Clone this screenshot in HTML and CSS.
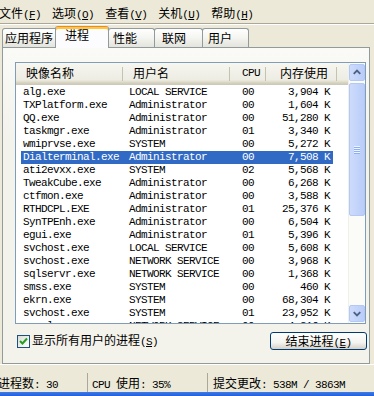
FILE: index.html
```html
<!DOCTYPE html>
<html lang="zh-CN">
<head>
    <meta charset="UTF-8">
    <title>Windows 任务管理器</title>
    <link rel="stylesheet" href="styles.css">
</head>
<body>

    <div class="window">
        <!-- Menu Bar -->
        <div class="menubar">
            <span class="menu">文件<span class="en">(<u>F</u>)</span></span>
            <span class="menu">选项<span class="en">(<u>O</u>)</span></span>
            <span class="menu">查看<span class="en">(<u>V</u>)</span></span>
            <span class="menu">关机<span class="en">(<u>U</u>)</span></span>
            <span class="menu">帮助<span class="en">(<u>H</u>)</span></span>
        </div>

        <!-- Tabs -->
        <div class="tabs">
            <div class="tab tab-app">应用程序</div>
            <div class="tab active">进程</div>
            <div class="tab tab-perf">性能</div>
            <div class="tab tab-net">联网</div>
            <div class="tab tab-user">用户</div>
        </div>

        <!-- Processes Page -->
        <div class="panel">
            <div class="listbox">
                <div class="listmain">
                    <div class="header">
                        <div class="hcell c-name">映像名称</div>
                        <div class="hcell c-user">用户名</div>
                        <div class="hcell c-cpu en">CPU</div>
                        <div class="hcell c-mem">内存使用</div>
                        <div class="hcell c-rest"></div>
                    </div>
                    <div class="rows en">
                        <div class="row"><span class="name">alg.exe</span><span class="user">LOCAL SERVICE</span><span class="cpu">00</span><span class="mem">3,904 K</span></div>
                        <div class="row"><span class="name">TXPlatform.exe</span><span class="user">Administrator</span><span class="cpu">00</span><span class="mem">1,604 K</span></div>
                        <div class="row"><span class="name">QQ.exe</span><span class="user">Administrator</span><span class="cpu">00</span><span class="mem">51,280 K</span></div>
                        <div class="row"><span class="name">taskmgr.exe</span><span class="user">Administrator</span><span class="cpu">01</span><span class="mem">3,340 K</span></div>
                        <div class="row"><span class="name">wmiprvse.exe</span><span class="user">SYSTEM</span><span class="cpu">00</span><span class="mem">5,272 K</span></div>
                        <div class="row selected"><span class="name">Dialterminal.exe</span><span class="user">Administrator</span><span class="cpu">00</span><span class="mem">7,508 K</span></div>
                        <div class="row"><span class="name">ati2evxx.exe</span><span class="user">SYSTEM</span><span class="cpu">02</span><span class="mem">5,568 K</span></div>
                        <div class="row"><span class="name">TweakCube.exe</span><span class="user">Administrator</span><span class="cpu">00</span><span class="mem">6,268 K</span></div>
                        <div class="row"><span class="name">ctfmon.exe</span><span class="user">Administrator</span><span class="cpu">00</span><span class="mem">3,588 K</span></div>
                        <div class="row"><span class="name">RTHDCPL.EXE</span><span class="user">Administrator</span><span class="cpu">01</span><span class="mem">25,376 K</span></div>
                        <div class="row"><span class="name">SynTPEnh.exe</span><span class="user">Administrator</span><span class="cpu">00</span><span class="mem">6,504 K</span></div>
                        <div class="row"><span class="name">egui.exe</span><span class="user">Administrator</span><span class="cpu">01</span><span class="mem">5,396 K</span></div>
                        <div class="row"><span class="name">svchost.exe</span><span class="user">LOCAL SERVICE</span><span class="cpu">00</span><span class="mem">5,608 K</span></div>
                        <div class="row"><span class="name">svchost.exe</span><span class="user">NETWORK SERVICE</span><span class="cpu">00</span><span class="mem">3,968 K</span></div>
                        <div class="row"><span class="name">sqlservr.exe</span><span class="user">NETWORK SERVICE</span><span class="cpu">00</span><span class="mem">1,368 K</span></div>
                        <div class="row"><span class="name">smss.exe</span><span class="user">SYSTEM</span><span class="cpu">00</span><span class="mem">460 K</span></div>
                        <div class="row"><span class="name">ekrn.exe</span><span class="user">SYSTEM</span><span class="cpu">00</span><span class="mem">68,304 K</span></div>
                        <div class="row"><span class="name">svchost.exe</span><span class="user">SYSTEM</span><span class="cpu">01</span><span class="mem">23,952 K</span></div>
                        <div class="row"><span class="name">spoolsv.exe</span><span class="user">NETWORK SERVICE</span><span class="cpu">00</span><span class="mem">4,316 K</span></div>
                    </div>
                </div>
                <div class="scrollbar">
                    <div class="sbtn">
                        <svg width="15" height="15" viewBox="0 0 15 15"><path d="M4 9 L7.5 5.5 L11 9" fill="none" stroke="#4D6185" stroke-width="2"/></svg>
                    </div>
                    <div class="track">
                        <div class="thumb">
                            <svg width="8" height="8" viewBox="0 0 8 8">
                                <rect x="1" y="0" width="6" height="1" fill="#EEF4FE"/>
                                <rect x="1" y="1" width="6" height="1" fill="#8CB0F8"/>
                                <rect x="1" y="2" width="6" height="1" fill="#EEF4FE"/>
                                <rect x="1" y="3" width="6" height="1" fill="#8CB0F8"/>
                                <rect x="1" y="4" width="6" height="1" fill="#EEF4FE"/>
                                <rect x="1" y="5" width="6" height="1" fill="#8CB0F8"/>
                                <rect x="1" y="6" width="6" height="1" fill="#EEF4FE"/>
                                <rect x="1" y="7" width="6" height="1" fill="#8CB0F8"/>
                            </svg>
                        </div>
                    </div>
                    <div class="sbtn">
                        <svg width="15" height="15" viewBox="0 0 15 15"><path d="M4 6 L7.5 9.5 L11 6" fill="none" stroke="#4D6185" stroke-width="2"/></svg>
                    </div>
                </div>
            </div>

            <div class="controls">
                <label class="check">
                    <span class="box">
                        <svg width="11" height="11" viewBox="0 0 11 11"><path d="M2 5 L4.5 7.5 L9 2.5" fill="none" stroke="#21A121" stroke-width="2"/></svg>
                    </span>
                    <span>显示所有用户的进程<span class="en">(<u>S</u>)</span></span>
                </label>
                <button class="end-btn">结束进程<span class="en">(<u>E</u>)</span></button>
            </div>
        </div>

        <!-- Status Bar -->
        <div class="statusbar">
            <div class="field f-count">进程数<span class="en">: 30</span></div>
            <div class="field f-cpu"><span class="en">CPU </span>使用<span class="en">: 35%</span></div>
            <div class="field f-commit">提交更改<span class="en">: 538M / 3863M</span></div>
        </div>
        <div class="taskbar"></div>
    </div>

</body>
</html>
```

FILE: styles.css
```css
/* Basic Page Styling */
* {
    box-sizing: border-box;
}
body {
    margin: 0;
    background-color: #ECE9D8;
    font-family: "Noto Sans CJK SC", sans-serif;
    font-size: 12px;
    color: #000;
}
.window {
    width: 374px;
    height: 396px;
    overflow: hidden;
    display: flex;
    flex-direction: column;
    background-color: #ECE9D8;
}
.en {
    font-family: "Liberation Mono", monospace;
    font-size: 11px;
    letter-spacing: -0.6px;
}
/* Menu Bar */
.menubar {
    height: 24px;
    display: flex;
    gap: 11px;
    margin-left: -1px;
    padding-top: 4px;
    line-height: 18px;
    border-bottom: 1px solid #ACA899;
    box-shadow: 0 1px 0 #fff;
    white-space: nowrap;
}
/* Tabs */
.tabs {
    display: flex;
    align-items: flex-end;
    height: 21px;
    margin-top: 2px;
    padding-left: 2px;
    position: relative;
    z-index: 1;
}
.tab {
    height: 19px;
    border: 1px solid #919B9C;
    border-bottom: none;
    border-radius: 3px 3px 0 0;
    background: linear-gradient(#FFFFFF, #F4F4F0 50%, #E4E3DC);
    line-height: 18px;
    margin-right: -1px;
    white-space: nowrap;
}
.tab-app {
    width: 56px;
    padding-left: 2px;
}
.tab.active {
    width: 54px;
    height: 22px;
    margin: 0 -1px -1px -2px;
    padding-left: 9px;
    line-height: 16px;
    background: #FCFCFE;
    border-top: 1px solid #E68B2C;
    box-shadow: inset 0 2px 0 #FFC73C;
    position: relative;
}
.tab-perf {
    width: 47px;
    padding-left: 4px;
}
.tab-net {
    width: 49px;
    padding-left: 7px;
}
.tab-user {
    width: 47px;
    padding-left: 5px;
}
/* Page Panel */
.panel {
    height: 317px;
    margin: 0 4px 0 2px;
    border: 1px solid #919B9C;
    background: linear-gradient(#FAFAF7, #F3F2EB 30%);
    padding: 14px 0 0 12px;
    display: flex;
    flex-direction: column;
}
.listbox {
    width: 351px;
    height: 262px;
    border: 1px solid #7F9DB9;
    background-color: #fff;
    display: flex;
}
.listmain {
    flex: 1;
    overflow: hidden;
}
/* Column Header */
.header {
    display: flex;
    height: 22px;
    margin-bottom: 1px;
    background: linear-gradient(#F7F6EF, #EEEDE4 75%, #E2DECD 85%, #D6D2C2 90%, #CBC7B8);
}
.hcell {
    height: 22px;
    line-height: 20px;
    padding-left: 10px;
    white-space: nowrap;
    background: linear-gradient(#C5C2B2, #C5C2B2) right 4px / 1px 14px no-repeat;
}
.c-name {
    width: 107px;
}
.c-user {
    width: 107px;
}
.c-cpu {
    width: 36px;
    padding-left: 12px;
}
.c-mem {
    width: 71px;
    padding-left: 0;
    padding-right: 9px;
    text-align: right;
}
.c-rest {
    flex: 1;
    background: none;
}
/* Process Rows */
.row {
    display: flex;
    width: 312px;
    height: 13px;
    line-height: 13px;
    margin-left: 5px;
    white-space: nowrap;
}
.row span {
    overflow: hidden;
}
.row .name {
    width: 102px;
    padding-left: 2px;
}
.row .user {
    width: 107px;
    padding-left: 6px;
}
.row .cpu {
    width: 36px;
    padding-left: 12px;
}
.row .mem {
    width: 67px;
    padding-right: 3px;
    text-align: right;
}
.row.selected {
    background-color: #316AC5;
    color: #fff;
}
/* Scrollbar */
.scrollbar {
    width: 17px;
    display: flex;
    flex-direction: column;
    background-color: #FBFBF8;
    border-left: 1px solid #F0EFE9;
}
.sbtn {
    height: 17px;
    margin: 1px 0;
    border: 1px solid #B4C8F6;
    border-radius: 2px;
    background: linear-gradient(to right, #CDDBFC, #BACDF8);
    display: flex;
    align-items: center;
    justify-content: center;
}
.track {
    flex: 1;
    padding: 1px 0;
}
.thumb {
    height: 133px;
    border: 1px solid #B4C8F6;
    border-radius: 2px;
    background: linear-gradient(to right, #CDDBFC, #BACDF8);
    display: flex;
    align-items: center;
    justify-content: center;
}
/* Bottom Controls */
.controls {
    width: 352px;
    height: 18px;
    margin-top: 8px;
    padding-left: 2px;
    display: flex;
    align-items: center;
    justify-content: space-between;
}
.check {
    display: flex;
    align-items: center;
    gap: 2px;
    line-height: 16px;
}
.box {
    width: 13px;
    height: 13px;
    border: 1px solid #1C5180;
    background: linear-gradient(135deg, #DCDCD7, #FFFFFF);
    display: flex;
}
.end-btn {
    width: 97px;
    height: 18px;
    padding: 0;
    border: 1px solid #003C74;
    border-radius: 3px;
    background: linear-gradient(#FFFFFF, #F3F3EF 60%, #D6D0C5);
    font-family: "Noto Sans CJK SC", sans-serif;
    font-size: 12px;
    line-height: 15px;
    color: #000;
}
/* Status Bar */
.statusbar {
    height: 28px;
    padding-top: 8px;
    display: flex;
    border-top: 1px solid #fff;
    white-space: nowrap;
}
.field {
    height: 20px;
    line-height: 19px;
    border-right: 1px solid #ACA899;
}
.f-count {
    width: 88px;
    text-indent: -2px;
}
.f-cpu {
    width: 120px;
    padding-left: 4px;
}
.f-commit {
    flex: 1;
    padding-left: 5px;
    border-right: none;
}
.taskbar {
    height: 4px;
    background: linear-gradient(#3D7BE8, #245EDB);
}
```
